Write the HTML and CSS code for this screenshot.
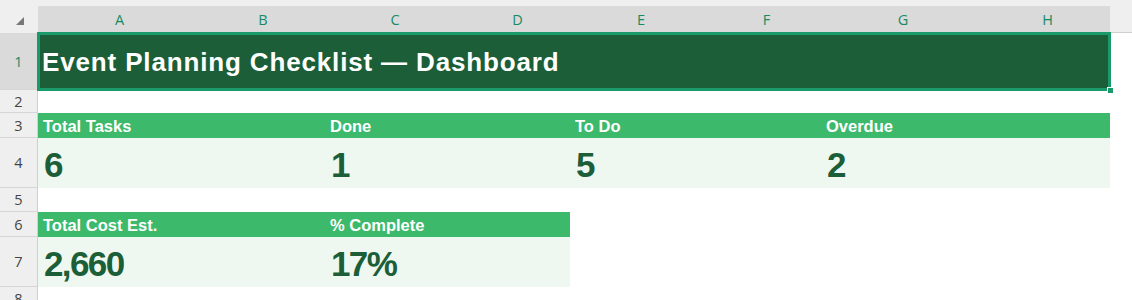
FILE: index.html
```html
<!DOCTYPE html>
<html lang="en">
<head>
    <meta charset="UTF-8">
    <title>Event Planning Checklist — Dashboard</title>
    <link rel="stylesheet" href="styles.css">
</head>
<body>

    <div class="top-gap"></div>

    <div class="sheet">
        <!-- column headers -->
        <div class="corner">
            <svg width="10" height="10" viewBox="0 0 10 10"><polygon points="9,1 9,9 1,9" fill="#777"/></svg>
        </div>
        <div class="col-head">A</div>
        <div class="col-head">B</div>
        <div class="col-head">C</div>
        <div class="col-head">D</div>
        <div class="col-head">E</div>
        <div class="col-head">F</div>
        <div class="col-head">G</div>
        <div class="col-head">H</div>
        <div class="col-head blank"></div>

        <!-- row 1 -->
        <div class="row-head active">1</div>
        <div class="cell title span-8">
            Event Planning Checklist — Dashboard
            <span class="fill-handle"></span>
        </div>
        <div class="cell"></div>

        <!-- row 2 -->
        <div class="row-head">2</div>
        <div class="cell span-rest"></div>

        <!-- row 3 -->
        <div class="row-head">3</div>
        <div class="cell label span-2">Total Tasks</div>
        <div class="cell label span-2">Done</div>
        <div class="cell label span-2">To Do</div>
        <div class="cell label span-2">Overdue</div>
        <div class="cell"></div>

        <!-- row 4 -->
        <div class="row-head">4</div>
        <div class="cell value span-2">6</div>
        <div class="cell value span-2">1</div>
        <div class="cell value span-2">5</div>
        <div class="cell value span-2">2</div>
        <div class="cell"></div>

        <!-- row 5 -->
        <div class="row-head">5</div>
        <div class="cell span-rest"></div>

        <!-- row 6 -->
        <div class="row-head">6</div>
        <div class="cell label span-2">Total Cost Est.</div>
        <div class="cell label span-2">% Complete</div>
        <div class="cell span-rest"></div>

        <!-- row 7 -->
        <div class="row-head">7</div>
        <div class="cell value span-2">2,660</div>
        <div class="cell value span-2">17%</div>
        <div class="cell span-rest"></div>

        <!-- row 8 -->
        <div class="row-head">8</div>
        <div class="cell span-rest"></div>
    </div>

</body>
</html>
```

FILE: styles.css
```css
body {
    margin: 0;
    background: #fff;
    font-family: "Liberation Sans", Arial, sans-serif;
}
.top-gap {
    height: 6px;
    background: #efefef;
}
.sheet {
    display: grid;
    grid-template-columns: 38px 163px 124px 140px 105px 142px 109px 164px 125px 1fr;
    grid-template-rows: 27px 57px 23px 25px 50px 24px 25px 50px 24px;
}
.corner {
    background: #efefef;
    display: flex;
    align-items: flex-start;
    justify-content: flex-start;
    padding: 10px 0 0 15px;
}
.col-head {
    background: #dadada;
    color: #168a63;
    font-family: "Open Sans", "Liberation Sans", sans-serif;
    font-size: 14.5px;
    display: flex;
    align-items: center;
    justify-content: center;
}
.col-head.blank {
    background: #efefef;
    border-bottom: 1px solid #cfcfcf;
}
.row-head {
    background: #efefef;
    color: #444;
    font-family: "Open Sans", "Liberation Sans", sans-serif;
    font-size: 14.5px;
    display: flex;
    align-items: center;
    justify-content: center;
    border-right: 1px solid #d0d0d0;
    border-bottom: 1px solid #d6d6d6;
}
.row-head.active {
    background: #dadada;
    color: #168a63;
}
.cell {
    background: #fff;
    display: flex;
    align-items: center;
    min-width: 0;
    white-space: nowrap;
}
.span-2 {
    grid-column: span 2;
}
.span-8 {
    grid-column: span 8;
}
.span-rest {
    grid-column: auto / -1;
}
.title {
    position: relative;
    background: #1b5e38;
    color: #fff;
    font-size: 26px;
    font-weight: bold;
    letter-spacing: 0.85px;
    padding: 1px 0 0 4px;
    box-shadow: inset 0 0 0 2px #1a9a6a, 0 0 0 1px #1a9a6a;
}
.fill-handle {
    position: absolute;
    right: -4px;
    bottom: -4px;
    width: 5px;
    height: 5px;
    background: #1a9a6a;
    border: 1px solid #fff;
}
.label {
    background: #3cb96a;
    color: #fff;
    font-size: 16.5px;
    font-weight: bold;
    padding: 2px 0 0 5px;
}
.value {
    background: #eef8f0;
    color: #1b5e38;
    font-size: 35px;
    font-weight: bold;
    letter-spacing: -1.6px;
    padding: 3px 0 0 6px;
}
```
